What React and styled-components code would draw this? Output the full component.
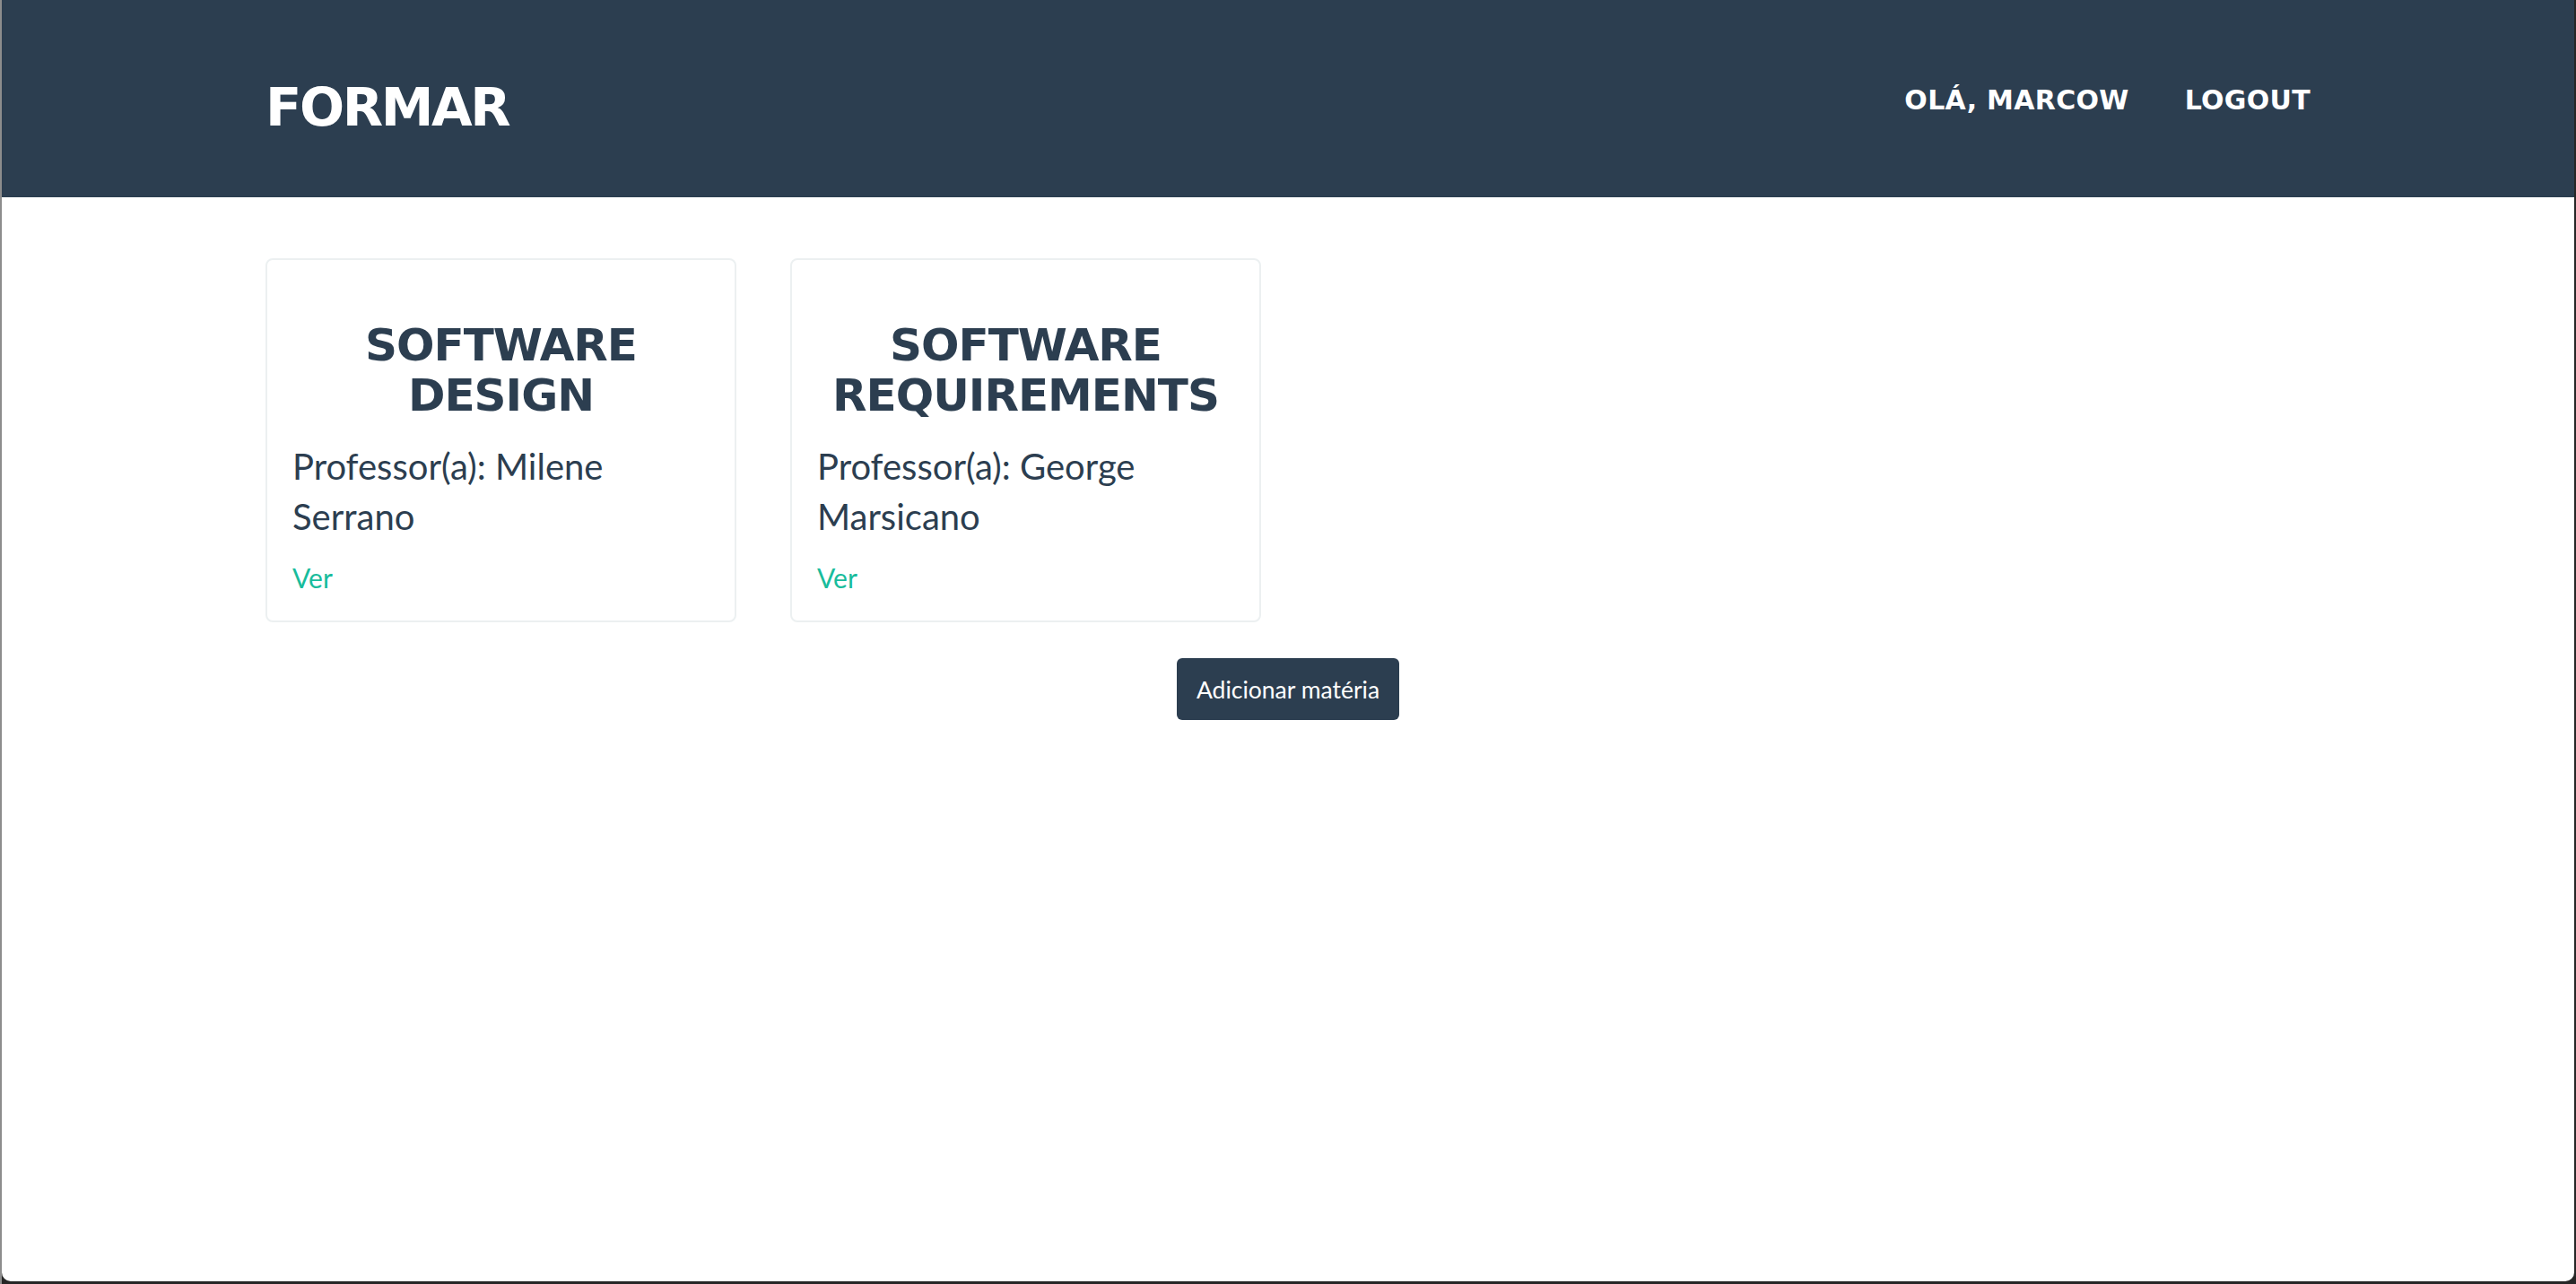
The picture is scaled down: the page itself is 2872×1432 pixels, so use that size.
import { createGlobalStyle, styled } from "styled-components";

const GlobalStyle = createGlobalStyle`
    html, body {
        margin: 0;
        padding: 0;
        background: #1f1f1f;
    }
    * {
        box-sizing: border-box;
    }
`;

const Frame = styled.div`
    height: 1432px;
    padding: 0 2px 3px 0;
    border-left: 2px solid #8d8d8d;
    background: #262626;
`;

const Window = styled.div`
    height: 100%;
    background: #ffffff;
    border-radius: 0 0 10px 10px;
    overflow: hidden;
    font-family: "Lato", "Liberation Sans", sans-serif;
    color: #2c3e50;
`;

const Navbar = styled.header`
    height: 220px;
    background: #2c3e50;
`;

const Container = styled.div`
    width: 2280px;
    margin: 0 auto;
`;

const NavInner = styled(Container)`
    height: 100%;
    display: flex;
    align-items: center;
    justify-content: space-between;
`;

const Brand = styled.a`
    margin-top: 19px;
    font-family: "DejaVu Sans", sans-serif;
    font-weight: 700;
    font-size: 59px;
    line-height: 1;
    letter-spacing: -2.4px;
    color: #ffffff;
    text-decoration: none;
`;

const NavLinks = styled.nav`
    display: flex;
    gap: 62px;
    margin-top: 3px;
`;

const NavLink = styled.a`
    font-family: "DejaVu Sans", sans-serif;
    font-weight: 700;
    font-size: 30px;
    line-height: 1;
    letter-spacing: 0.3px;
    color: #ffffff;
    text-decoration: none;
    text-transform: uppercase;
`;

const Main = styled(Container)`
    padding-top: 68px;
    display: flex;
    flex-direction: column;
`;

const CardRow = styled.div`
    display: flex;
    gap: 60px;
`;

const Card = styled.div`
    width: 525px;
    border: 2px solid #ecf0f1;
    border-radius: 8px;
    padding: 0 28px 27px;
`;

const Title = styled.h3`
    margin: 67px 0 23px;
    font-family: "DejaVu Sans", sans-serif;
    font-weight: 700;
    font-size: 50px;
    line-height: 56px;
    letter-spacing: -1px;
    text-align: center;
    text-transform: uppercase;
`;

const Teacher = styled.p`
    margin: 0 0 19px;
    font-size: 40px;
    line-height: 56px;
`;

const SeeLink = styled.a`
    display: block;
    font-size: 30px;
    line-height: 42px;
    color: #18bc9c;
    text-decoration: none;
`;

const AddButton = styled.button`
    align-self: center;
    margin-top: 40px;
    height: 69px;
    padding: 0 22px;
    border: none;
    border-radius: 6px;
    background: #2c3e50;
    color: #ffffff;
    font-family: "Lato", "Liberation Sans", sans-serif;
    font-size: 26.5px;
    cursor: pointer;
`;

const subjects = [
    { name: "Software Design", teacher: "Milene Serrano" },
    { name: "Software Requirements", teacher: "George Marsicano" },
];

function App() {
    return (
        <>
            <GlobalStyle />
            <Frame>
                <Window>
                    <Navbar>
                        <NavInner>
                            <Brand href="#">FORMAR</Brand>
                            <NavLinks>
                                <NavLink href="#">Olá, Marcow</NavLink>
                                <NavLink href="#">Logout</NavLink>
                            </NavLinks>
                        </NavInner>
                    </Navbar>

                    <Main>
                        <CardRow>
                            {subjects.map((item) => (
                                <Card key={item.name}>
                                    <Title>{item.name}</Title>
                                    <Teacher>Professor(a): {item.teacher}</Teacher>
                                    <SeeLink href="#">Ver</SeeLink>
                                </Card>
                            ))}
                        </CardRow>

                        <AddButton>Adicionar matéria</AddButton>
                    </Main>
                </Window>
            </Frame>
        </>
    );
}

export default App;
